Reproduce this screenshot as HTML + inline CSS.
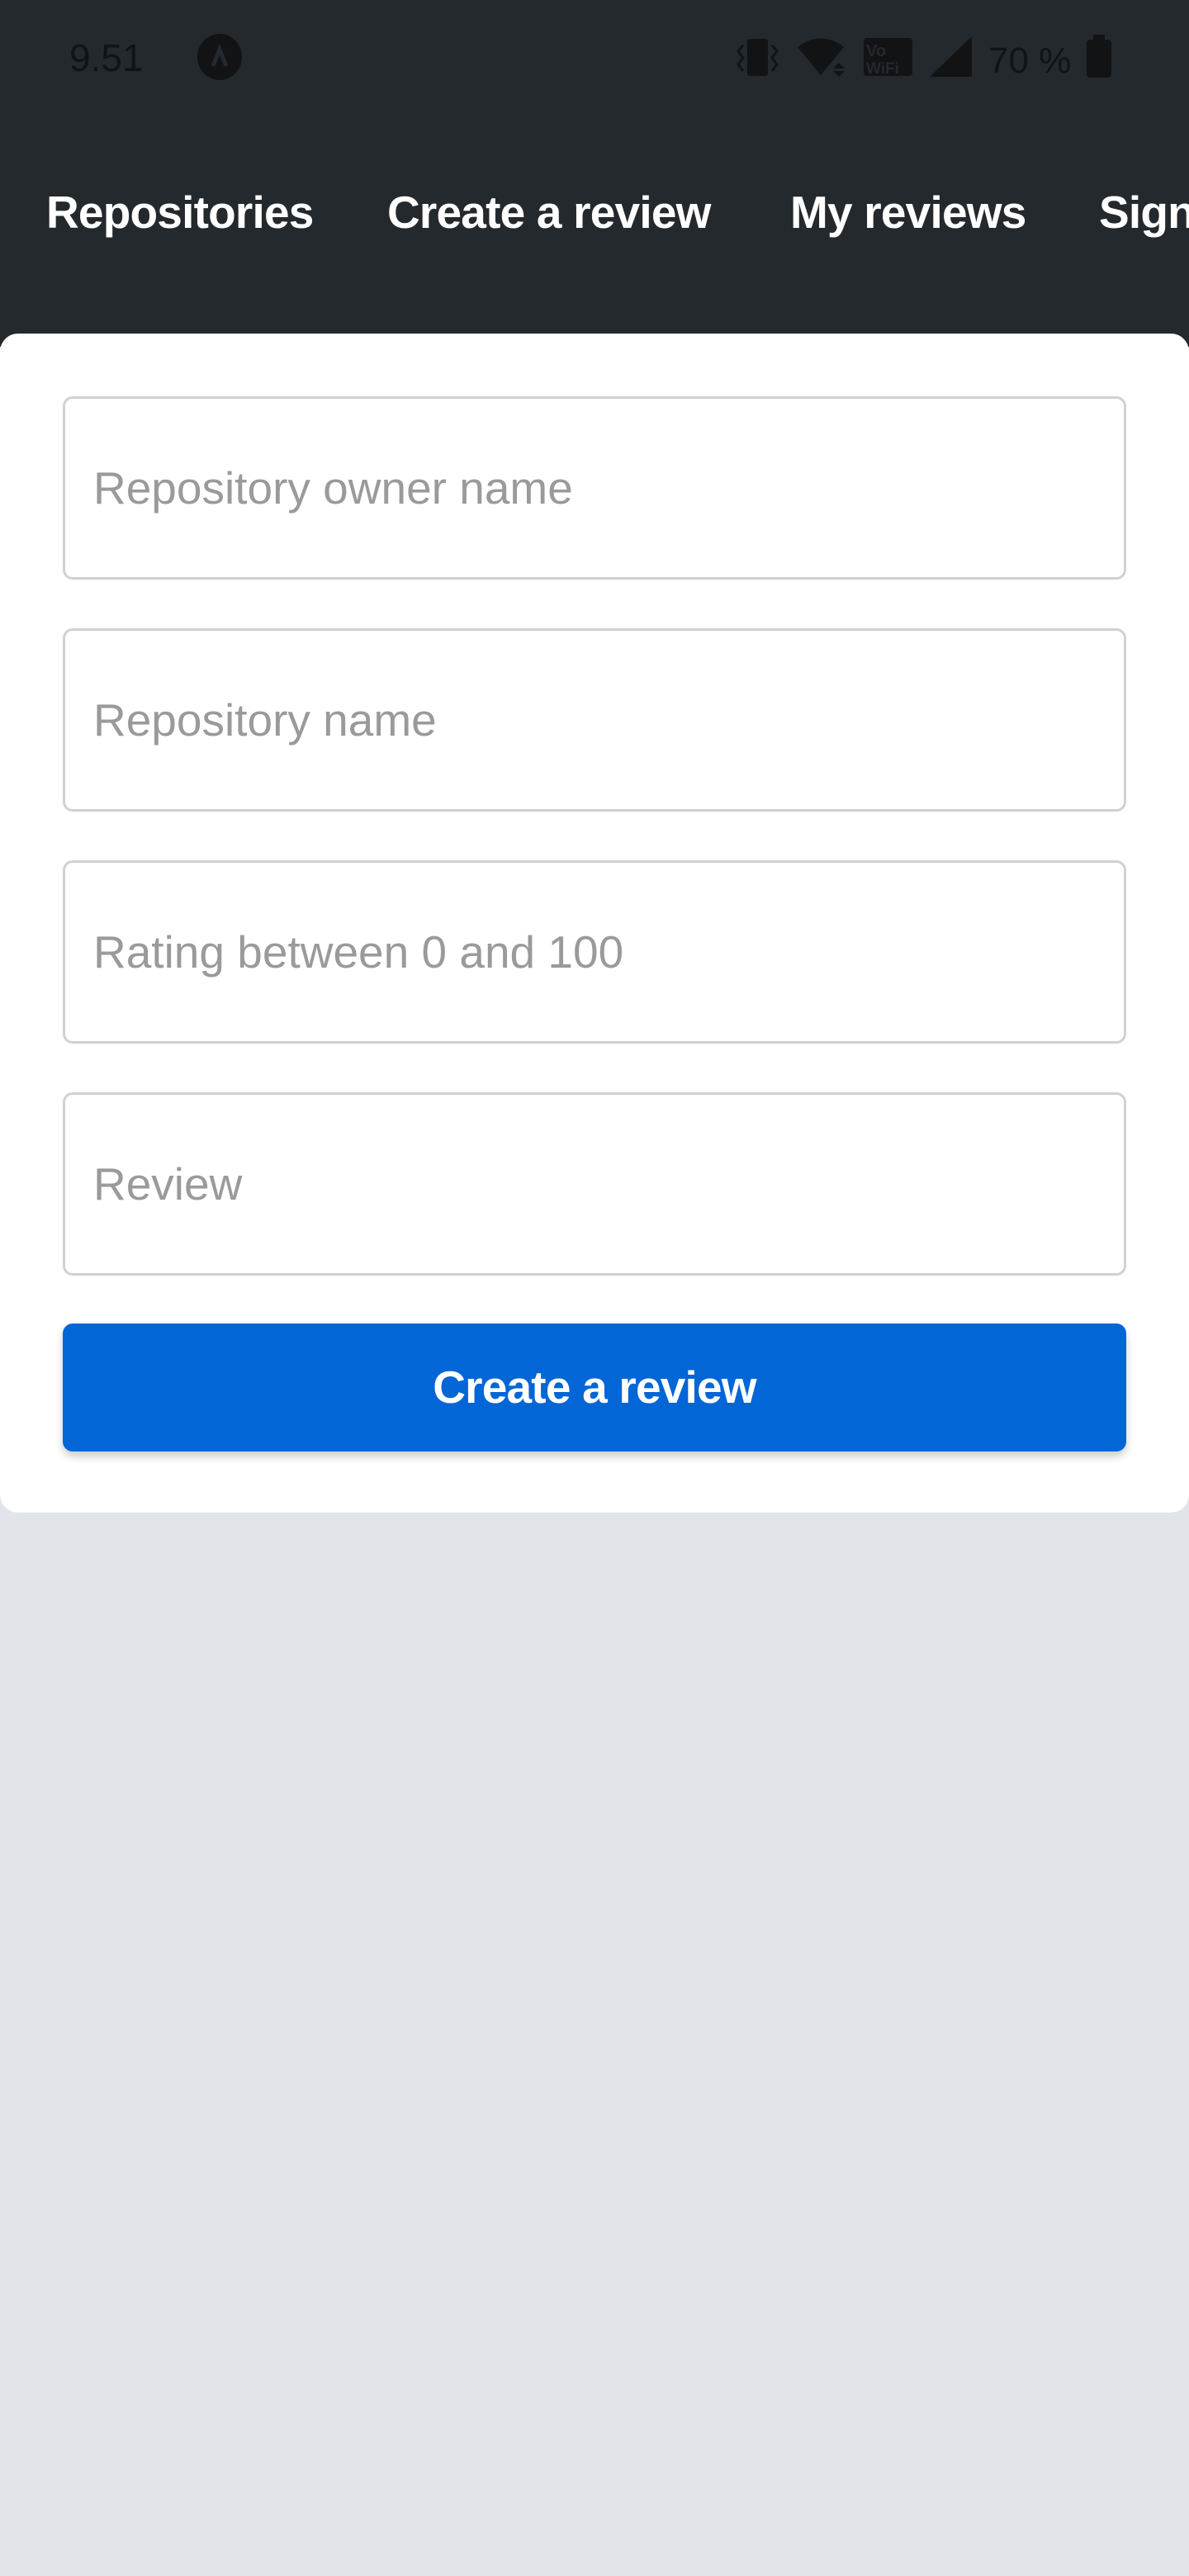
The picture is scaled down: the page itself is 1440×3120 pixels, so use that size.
<!DOCTYPE html>
<html><head><meta charset="utf-8"><style>
*{margin:0;padding:0;box-sizing:border-box}
html,body{width:1440px;height:3120px;background:#e1e4e8;font-family:"Liberation Sans",Arial,sans-serif;overflow:hidden;position:relative}
.hdr{position:absolute;left:0;top:0;width:1440px;height:420px;background:#24292e}
.st{position:absolute;color:#111315;font-size:46px;top:44px;line-height:52px}
.nav{position:absolute;top:224px;color:#fff;font-weight:bold;font-size:55px;line-height:66px;letter-spacing:-0.8px;white-space:nowrap}
.card{position:absolute;left:0;top:404px;width:1440px;height:1428px;background:#fff;border-radius:22px}
.inp{position:absolute;left:76px;width:1288px;height:222px;border:3px solid #cfd1d4;border-radius:12px;font-size:55px;color:#9a9a9a;padding-left:34px;line-height:216px}
.btn{position:absolute;left:76px;top:1603px;width:1288px;height:155px;background:#0366d6;border-radius:12px;color:#fff;font-weight:bold;font-size:55px;letter-spacing:-0.8px;text-align:center;line-height:155px;box-shadow:0 6px 10px rgba(0,0,0,.2)}
</style></head><body>
<div class="hdr"></div>
<div class="st" style="left:84px">9.51</div>
<svg style="position:absolute;left:238px;top:40px" width="56" height="58" viewBox="0 0 56 58"><ellipse cx="28" cy="29" rx="27" ry="28" fill="#111315"/><path d="M20 40 L28 20 L36 40" stroke="#24292e" stroke-width="5" fill="none"/></svg>
<svg style="position:absolute;left:890px;top:40px" width="460" height="58" viewBox="890 40 460 58">
<g fill="#111315">
<rect x="905" y="47" width="25" height="45" rx="3"/>
<path d="M900 55 L894 62 L900 70 L894 78 L900 86" stroke="#111315" stroke-width="3" fill="none"/>
<path d="M935 55 L941 62 L935 70 L941 78 L935 86" stroke="#111315" stroke-width="3" fill="none"/>
<path d="M966 57 Q994 36 1022 57 L994 91 Z"/>
<path d="M1009 83 L1016 76 L1023 83 Z M1009 86 L1023 86 L1016 93 Z"/>
<rect x="1046" y="46" width="59" height="46" rx="4"/>
<path d="M1126 93 L1177 44 L1177 93 Z"/>
<rect x="1316" y="48" width="30" height="46" rx="4"/><rect x="1324" y="42" width="14" height="8"/>
</g>
<text x="1049" y="68" font-family="Liberation Sans" font-weight="bold" font-size="20" fill="#24292e">Vo</text>
<text x="1049" y="89" font-family="Liberation Sans" font-weight="bold" font-size="19" fill="#24292e">WiFi</text>
<text x="1197" y="88" font-family="Liberation Sans" font-size="44" fill="#111315">70 %</text>
</svg>
<div class="nav" style="left:56px">Repositories</div>
<div class="nav" style="left:469px">Create a review</div>
<div class="nav" style="left:957px">My reviews</div>
<div class="nav" style="left:1331px">Sign in</div>
<div class="card"></div>
<div class="inp" style="top:480px">Repository owner name</div>
<div class="inp" style="top:761px">Repository name</div>
<div class="inp" style="top:1042px">Rating between 0 and 100</div>
<div class="inp" style="top:1323px">Review</div>
<div class="btn">Create a review</div>
</body></html>
